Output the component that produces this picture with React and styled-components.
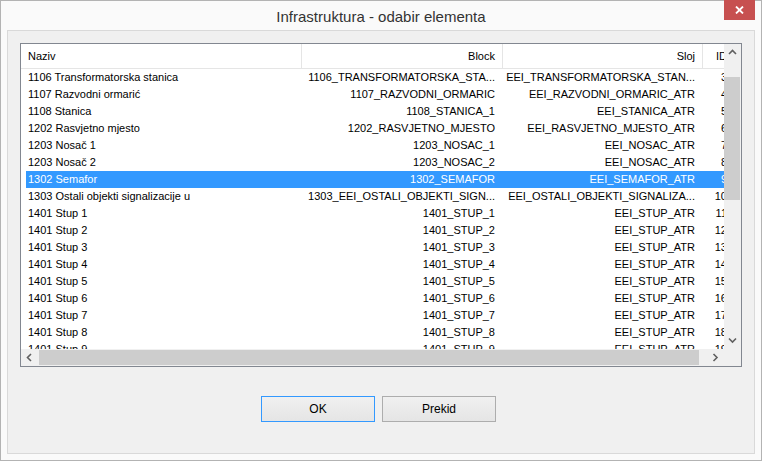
import React from 'react';
import styled, { createGlobalStyle } from 'styled-components';

const GlobalStyle = createGlobalStyle`
  * { box-sizing: border-box; }
  body {
    margin: 0;
    background: #fafafa;
    font-family: "Liberation Sans", Arial, sans-serif;
  }
`;

const Window = styled.div`
  width: 762px;
  height: 461px;
  border: 1px solid #b3b3b3;
  background: #fafafa;
  display: flex;
  flex-direction: column;
  padding: 0 6px 6px;
`;

const TitleBar = styled.div`
  height: 29px;
  display: grid;
  grid-template-columns: 1fr auto 1fr;
  align-items: center;
`;

const Title = styled.div`
  grid-column: 2;
  font-size: 15px;
  color: #333;
  padding-top: 2px;
`;

const CloseButton = styled.div`
  grid-column: 3;
  justify-self: end;
  align-self: start;
  width: 31px;
  height: 20px;
  margin-top: -1px;
  background: #c75050;
  display: flex;
  align-items: center;
  justify-content: center;
`;

const Panel = styled.div`
  flex: 1;
  border: 1px solid #d9d9d9;
  background: #f0f0f0;
  padding: 12px 12px 0;
  display: flex;
  flex-direction: column;
`;

const ListView = styled.div`
  height: 324px;
  border: 1px solid #828790;
  background: #fff;
  display: grid;
  grid-template-columns: 1fr 17px;
  grid-template-rows: 1fr 17px;
  overflow: hidden;
`;

const Viewport = styled.div`
  overflow: hidden;
  font-size: 11px;
  color: #000;
`;

const HeaderRow = styled.div`
  display: flex;
  height: 25px;
  border-bottom: 1px solid #e5e5e5;
`;

const HeaderCell = styled.div`
  flex-shrink: 0;
  width: ${p => p.$w}px;
  border-right: 1px solid #e5e5e5;
  padding: 0 7px;
  text-align: ${p => p.$align || 'right'};
  line-height: 24px;
  white-space: nowrap;
  overflow: hidden;
`;

const Row = styled.div`
  display: flex;
  height: 17px;
  margin-left: 5px;
  background: ${p => (p.$selected ? '#3399ff' : 'transparent')};
  color: ${p => (p.$selected ? '#fff' : '#000')};
`;

const Cell = styled.div`
  flex-shrink: 0;
  width: ${p => p.$w}px;
  padding: ${p => (p.$first ? '0 0 0 2px' : '0 8px 0 0')};
  text-align: ${p => (p.$first ? 'left' : 'right')};
  line-height: 17px;
  white-space: nowrap;
  overflow: hidden;
`;

const VScroll = styled.div`
  background: #f0f0f0;
  display: flex;
  flex-direction: column;
`;

const HScroll = styled.div`
  background: #f0f0f0;
  display: flex;
`;

const Corner = styled.div`
  background: #f0f0f0;
`;

const ArrowBox = styled.div`
  flex-shrink: 0;
  width: 17px;
  height: 17px;
  display: flex;
  align-items: center;
  justify-content: center;
`;

const Track = styled.div`
  flex: 1;
  display: flex;
  flex-direction: ${p => (p.$vertical ? 'column' : 'row')};
`;

const Thumb = styled.div`
  background: #cdcdcd;
  ${p =>
    p.$vertical
      ? `width: 16px; height: ${p.$size}px; margin-top: ${p.$offset}px;`
      : `height: 15px; align-self: center; width: ${p.$size}px; margin-left: ${p.$offset}px;`}
`;

const ButtonRow = styled.div`
  display: flex;
  justify-content: center;
  gap: 7px;
  margin-top: 29px;
  padding-right: 5px;
`;

const Button = styled.button`
  width: 114px;
  height: 26px;
  border: 1px solid ${p => (p.$primary ? '#3399ff' : '#adadad')};
  background: linear-gradient(#f0f0f0, #e5e5e5);
  font-family: "Liberation Sans", Arial, sans-serif;
  font-size: 12px;
  color: #000;
  padding: 0;
`;

const Chevron = ({ dir }) => {
  const pts = {
    up: '1,5 4.5,1.5 8,5',
    down: '1,1.5 4.5,5 8,1.5',
    left: '5,1 1.5,4.5 5,8',
    right: '1.5,1 5,4.5 1.5,8',
  }[dir];
  const vertical = dir === 'up' || dir === 'down';
  return (
    <svg width={vertical ? 9 : 7} height={vertical ? 7 : 9} viewBox={vertical ? '0 0 9 7' : '0 0 7 9'}>
      <polyline points={pts} fill="none" stroke="#606060" strokeWidth="1.6" />
    </svg>
  );
};

const columns = [
  { title: 'Naziv', w: 281, rowW: 276, align: 'left' },
  { title: 'Block', w: 201 },
  { title: 'Sloj', w: 200 },
  { title: 'ID', w: 32 },
];

const rows = [
  ['1106 Transformatorska stanica', '1106_TRANSFORMATORSKA_STA...', 'EEI_TRANSFORMATORSKA_STAN...', '3'],
  ['1107 Razvodni ormarić', '1107_RAZVODNI_ORMARIC', 'EEI_RAZVODNI_ORMARIC_ATR', '4'],
  ['1108 Stanica', '1108_STANICA_1', 'EEI_STANICA_ATR', '5'],
  ['1202 Rasvjetno mjesto', '1202_RASVJETNO_MJESTO', 'EEI_RASVJETNO_MJESTO_ATR', '6'],
  ['1203 Nosač 1', '1203_NOSAC_1', 'EEI_NOSAC_ATR', '7'],
  ['1203 Nosač 2', '1203_NOSAC_2', 'EEI_NOSAC_ATR', '8'],
  ['1302 Semafor', '1302_SEMAFOR', 'EEI_SEMAFOR_ATR', '9'],
  ['1303 Ostali objekti signalizacije u', '1303_EEI_OSTALI_OBJEKTI_SIGN...', 'EEI_OSTALI_OBJEKTI_SIGNALIZA...', '10'],
  ...Array.from({ length: 9 }, (_, i) => [
    `1401 Stup ${i + 1}`,
    `1401_STUP_${i + 1}`,
    'EEI_STUP_ATR',
    String(11 + i),
  ]),
];

const App = () => {
  return (
    <>
      <GlobalStyle />
      <Window>
        <TitleBar>
          <Title>Infrastruktura - odabir elementa</Title>
          <CloseButton>
            <svg width="9" height="8" viewBox="0 0 9 8">
              <path d="M1 0.5 L8 7.5 M8 0.5 L1 7.5" stroke="#fff" strokeWidth="1.8" />
            </svg>
          </CloseButton>
        </TitleBar>
        <Panel>
          <ListView>
            <Viewport>
              <HeaderRow>
                {columns.map(c => (
                  <HeaderCell key={c.title} $w={c.w} $align={c.align}>
                    {c.title}
                  </HeaderCell>
                ))}
              </HeaderRow>
              {rows.map((r, i) => (
                <Row key={i} $selected={i === 6}>
                  {r.map((v, j) => (
                    <Cell key={j} $w={columns[j].rowW || columns[j].w} $first={j === 0}>
                      {v}
                    </Cell>
                  ))}
                </Row>
              ))}
            </Viewport>
            <VScroll>
              <ArrowBox><Chevron dir="up" /></ArrowBox>
              <Track $vertical>
                <Thumb $vertical $size={123} $offset={16} />
              </Track>
              <ArrowBox><Chevron dir="down" /></ArrowBox>
            </VScroll>
            <HScroll>
              <ArrowBox><Chevron dir="left" /></ArrowBox>
              <Track>
                <Thumb $size={660} $offset={1} />
              </Track>
              <ArrowBox><Chevron dir="right" /></ArrowBox>
            </HScroll>
            <Corner />
          </ListView>
          <ButtonRow>
            <Button $primary>OK</Button>
            <Button>Prekid</Button>
          </ButtonRow>
        </Panel>
      </Window>
    </>
  );
};

export default App;
